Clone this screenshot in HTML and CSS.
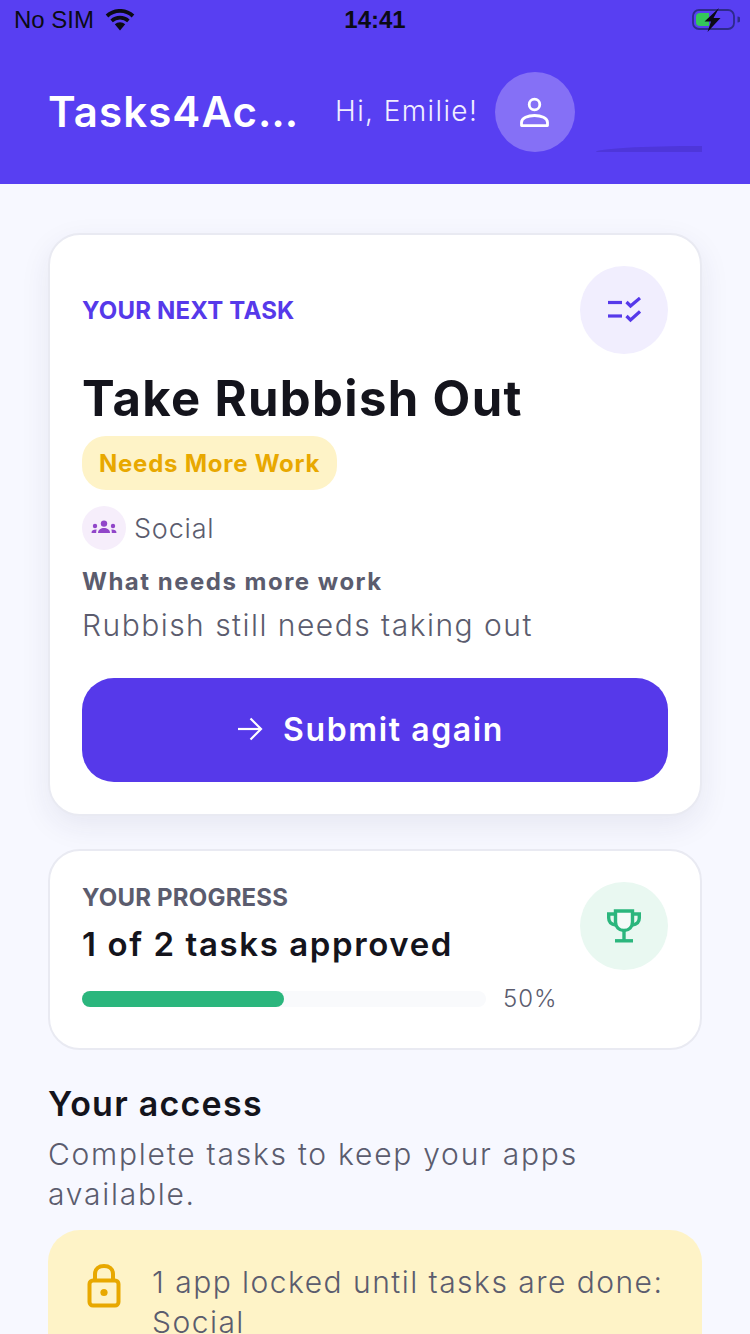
FILE: index.html
```html
<!DOCTYPE html>
<html lang="en">
<head>
    <meta charset="UTF-8">
    <meta name="viewport" content="width=device-width, initial-scale=1.0">
    <title>Tasks4Ac</title>
    <link rel="stylesheet" href="styles.css">
</head>
<body>

<header class="header">
    <div class="status-bar">
        <div class="status-left">
            <span>No SIM</span>
            <svg class="wifi" viewBox="0 0 30 22" width="30" height="22">
                <path d="M15 21.5 L9.8 15.2 A8 8 0 0 1 20.2 15.2 Z" fill="#0b0b14"/>
                <path d="M6.6 11.8 A12.6 12.6 0 0 1 23.4 11.8" fill="none" stroke="#0b0b14" stroke-width="3.6"/>
                <path d="M2 7 A19 19 0 0 1 28 7" fill="none" stroke="#0b0b14" stroke-width="3.8"/>
            </svg>
        </div>
        <span class="status-time">14:41</span>
        <div class="status-right">
            <svg class="battery" viewBox="0 0 48 24" width="48" height="24">
                <rect x="1" y="2" width="41" height="19" rx="6" fill="none" stroke="#2e2a8c" stroke-width="1.8"/>
                <path d="M8 5 H17 V18 H8 A4 4 0 0 1 4 14 V9 A4 4 0 0 1 8 5 Z" fill="#34c759"/>
                <path d="M45.5 8.5 a3 3 0 0 1 0 6 Z" fill="#2e2a8c"/>
                <path d="M27 0 L12.5 13.5 H19 L15.5 24 L28.5 10 H21.5 Z" fill="#0b0b14"/>
            </svg>
        </div>
    </div>
    <div class="header-row">
        <h1 class="app-title">Tasks4Ac…</h1>
        <span class="greeting">Hi, Emilie!</span>
        <div class="avatar">
            <svg viewBox="0 0 32 32" width="32" height="32" fill="none" stroke="#fff" stroke-width="2.8">
                <circle cx="15.5" cy="8.5" r="5.3"/>
                <path d="M2.5 29.6 V26.5 C2.5 22 9 19.5 15.5 19.5 C22 19.5 28.5 22 28.5 26.5 V29.6 Z" stroke-linejoin="round"/>
            </svg>
        </div>
    </div>
    <div class="header-shadow"></div>
</header>

<main class="content">

    <section class="card next-task">
        <div class="next-top">
            <span class="eyebrow">YOUR NEXT TASK</span>
            <div class="round-icon icon-purple">
                <svg viewBox="0 0 34 26" width="34" height="26" fill="none" stroke="#5639ea" stroke-width="3.2">
                    <path d="M1 5.5 H15"/>
                    <path d="M1 19 H15"/>
                    <path d="M19.5 5 L23.5 9 L33 1"/>
                    <path d="M19.5 19 L23.5 23 L33 14.5"/>
                </svg>
            </div>
        </div>
        <h2 class="task-title">Take Rubbish Out</h2>
        <span class="status-pill">Needs More Work</span>
        <div class="category">
            <div class="category-icon">
                <svg viewBox="0 0 26 16" width="26" height="16" fill="#9146c9">
                    <circle cx="13" cy="3.6" r="3.2"/>
                    <path d="M7 13 C7 9.5 10 8 13 8 C16 8 19 9.5 19 13 Z"/>
                    <circle cx="4" cy="6" r="2.2"/>
                    <path d="M0.5 13 C0.5 10.5 2.5 9.5 5.6 9.6 C5.2 10.8 5.2 12 5.2 13 Z"/>
                    <circle cx="22" cy="6" r="2.2"/>
                    <path d="M25.5 13 C25.5 10.5 23.5 9.5 20.4 9.6 C20.8 10.8 20.8 12 20.8 13 Z"/>
                </svg>
            </div>
            <span>Social</span>
        </div>
        <div class="feedback-label">What needs more work</div>
        <p class="feedback-text">Rubbish still needs taking out</p>
        <button class="submit-btn">
            <svg viewBox="0 0 26 24" width="26" height="24" fill="none" stroke="#fff" stroke-width="2.2">
                <path d="M1 12 H24"/>
                <path d="M13.5 1.5 L24 12 L13.5 22.5"/>
            </svg>
            <span>Submit again</span>
        </button>
    </section>

    <section class="card progress-card">
        <div class="progress-info">
            <div class="eyebrow eyebrow-grey">YOUR PROGRESS</div>
            <div class="progress-title">1 of 2 tasks approved</div>
            <div class="progress-row">
                <div class="progress-track">
                    <div class="progress-fill" style="width: 50%"></div>
                </div>
                <span class="progress-pct">50%</span>
            </div>
        </div>
        <div class="round-icon icon-green">
            <svg viewBox="0 0 34 34" width="34" height="34" fill="none" stroke="#2bb67d" stroke-width="3.4">
                <path d="M8.5 2 H25.5 V13 C25.5 18 22 21.5 17 21.5 C12 21.5 8.5 18 8.5 13 Z" fill="#f4fbf8"/>
                <path d="M8.5 5 H1.7 V9 C1.7 13 4.5 15.5 9 16"/>
                <path d="M25.5 5 H32.3 V9 C32.3 13 29.5 15.5 25 16"/>
                <path d="M17 21.5 V31"/>
                <path d="M8 31.8 H26"/>
            </svg>
        </div>
    </section>

    <section class="access">
        <h3 class="access-title">Your access</h3>
        <p class="access-text">Complete tasks to keep your apps available.</p>
        <div class="locked-box">
            <svg class="lock-icon" viewBox="0 0 34 44" width="34" height="44" fill="none" stroke="#e8a800" stroke-width="4">
                <path d="M8 17 V10 C8 4.5 12 2 17 2 C22 2 26 4.5 26 10 V17"/>
                <rect x="2.5" y="16.5" width="29" height="25" rx="3.5"/>
                <circle cx="17" cy="28.5" r="3.6" fill="#e8a800" stroke="none"/>
            </svg>
            <p class="locked-text">1 app locked until tasks are done: Social</p>
        </div>
    </section>

</main>

</body>
</html>
```

FILE: styles.css
```css
html, body {
    height: 1334px;
    overflow: hidden;
}

body {
    margin: 0;
    font-family: Inter, "Open Sans", sans-serif;
    background-color: #f7f8ff;
    color: #14141c;
}

/* 顶部 */
.header {
    position: relative;
    height: 184px;
    box-sizing: border-box;
    background-color: #583ff2;
}

.status-bar {
    height: 40px;
    padding: 0 10px 0 14px;
    display: flex;
    align-items: center;
    font-family: "Liberation Sans", Arial, sans-serif;
    font-size: 24px;
    color: #0b0b14;
}

.status-left,
.status-right {
    flex: 1;
    display: flex;
    align-items: center;
}

.status-left {
    gap: 11px;
}

.status-right {
    justify-content: flex-end;
}

.status-time {
    font-weight: 700;
    margin-right: 4px;
}

.header-row {
    margin-top: 32px;
    padding-left: 48px;
    display: flex;
    align-items: center;
}

.app-title {
    margin: 0;
    width: 287px;
    font-size: 42px;
    font-weight: 600;
    letter-spacing: 1.1px;
    color: #fff;
    line-height: 80px;
}

.greeting {
    width: 160px;
    font-size: 28px;
    font-weight: 300;
    letter-spacing: 1.4px;
    color: #f1eeff;
    margin-top: -2px;
}

.avatar {
    width: 80px;
    height: 80px;
    border-radius: 50%;
    background-color: #8570f6;
    display: flex;
    align-items: center;
    justify-content: center;
}

.header-shadow {
    position: absolute;
    left: 596px;
    top: 146px;
    width: 106px;
    height: 6px;
    border-radius: 100% 0 0 0;
    background-color: #4e36da;
}

/* 内容 */
.content {
    padding: 49px 48px 0;
}

.card {
    box-sizing: border-box;
    background-color: #fff;
    border: 2px solid #e9eaf2;
    border-radius: 32px;
}

.next-task {
    height: 583px;
    padding: 31px 32px;
    box-shadow: 0 10px 30px rgba(40, 40, 90, 0.08);
}

.next-top {
    display: flex;
    align-items: center;
    justify-content: space-between;
}

.eyebrow {
    font-size: 24px;
    font-weight: 700;
    letter-spacing: 0.2px;
    color: #5639ea;
}

.eyebrow-grey {
    margin-top: 1px;
    color: #5b5c6e;
}

.round-icon {
    width: 88px;
    height: 88px;
    border-radius: 50%;
    flex-shrink: 0;
    display: flex;
    align-items: center;
    justify-content: center;
}

.icon-purple {
    background-color: #f1eefe;
}

.icon-green {
    background-color: #e9f8f1;
}

.task-title {
    margin: 14px 0 0;
    font-size: 49px;
    font-weight: 700;
    letter-spacing: 1.35px;
    line-height: 62px;
    color: #14141c;
}

.status-pill {
    display: inline-block;
    margin-top: 6px;
    padding: 0 17px;
    height: 54px;
    line-height: 55px;
    border-radius: 24px;
    background-color: #fef3c7;
    color: #e8a800;
    font-size: 24px;
    font-weight: 700;
    letter-spacing: 0.75px;
}

.category {
    margin-top: 16px;
    display: flex;
    align-items: center;
    gap: 8px;
    font-size: 27px;
    font-weight: 300;
    letter-spacing: 0.8px;
    color: #5b5c6e;
}

.category-icon {
    width: 44px;
    height: 44px;
    border-radius: 50%;
    background-color: #f6eefb;
    display: flex;
    align-items: center;
    justify-content: center;
}

.feedback-label {
    margin-top: 16px;
    font-size: 24px;
    font-weight: 700;
    letter-spacing: 1.5px;
    line-height: 32px;
    color: #5b5c6e;
}

.feedback-text {
    margin: 6px 0 0;
    font-size: 30px;
    font-weight: 300;
    letter-spacing: 1.47px;
    line-height: 42px;
    color: #5b5c6e;
}

.submit-btn {
    margin-top: 32px;
    width: 100%;
    height: 104px;
    padding: 0 9px 2px 0;
    border: none;
    border-radius: 32px;
    background-color: #5639ea;
    color: #fff;
    font-family: inherit;
    font-size: 32px;
    font-weight: 600;
    letter-spacing: 1.6px;
    display: flex;
    align-items: center;
    justify-content: center;
    gap: 20px;
}

.progress-card {
    margin-top: 33px;
    height: 201px;
    padding: 31px 32px;
    display: flex;
    justify-content: space-between;
}

.progress-info {
    flex: 1;
}

.progress-title {
    margin-top: 10px;
    font-size: 33px;
    font-weight: 600;
    letter-spacing: 1.6px;
    line-height: 44px;
}

.progress-row {
    margin-top: 18px;
    display: flex;
    align-items: center;
    gap: 17px;
}

.progress-track {
    width: 404px;
    height: 16px;
    border-radius: 8px;
    background-color: #f9fafc;
}

.progress-fill {
    height: 100%;
    border-radius: 8px;
    background-color: #2bb67d;
}

.progress-pct {
    font-size: 24px;
    font-weight: 300;
    letter-spacing: 1px;
    color: #5b5c6e;
}

.access {
    margin-top: 31px;
}

.access-title {
    margin: 0;
    font-size: 34px;
    font-weight: 600;
    letter-spacing: 1.25px;
    line-height: 46px;
}

.access-text {
    margin: 7px 0 0;
    font-size: 30px;
    font-weight: 300;
    letter-spacing: 1.75px;
    line-height: 40px;
    color: #5b5c6e;
}

.locked-box {
    margin-top: 16px;
    padding: 32px 36px 32px 39px;
    background-color: #fef3c7;
    border-radius: 32px;
    display: flex;
    gap: 31px;
}

.lock-icon {
    flex-shrink: 0;
    margin-top: 2px;
}

.locked-text {
    margin: 0;
    font-size: 30px;
    font-weight: 300;
    letter-spacing: 1.47px;
    line-height: 40px;
    color: #5b5c6e;
}
```
